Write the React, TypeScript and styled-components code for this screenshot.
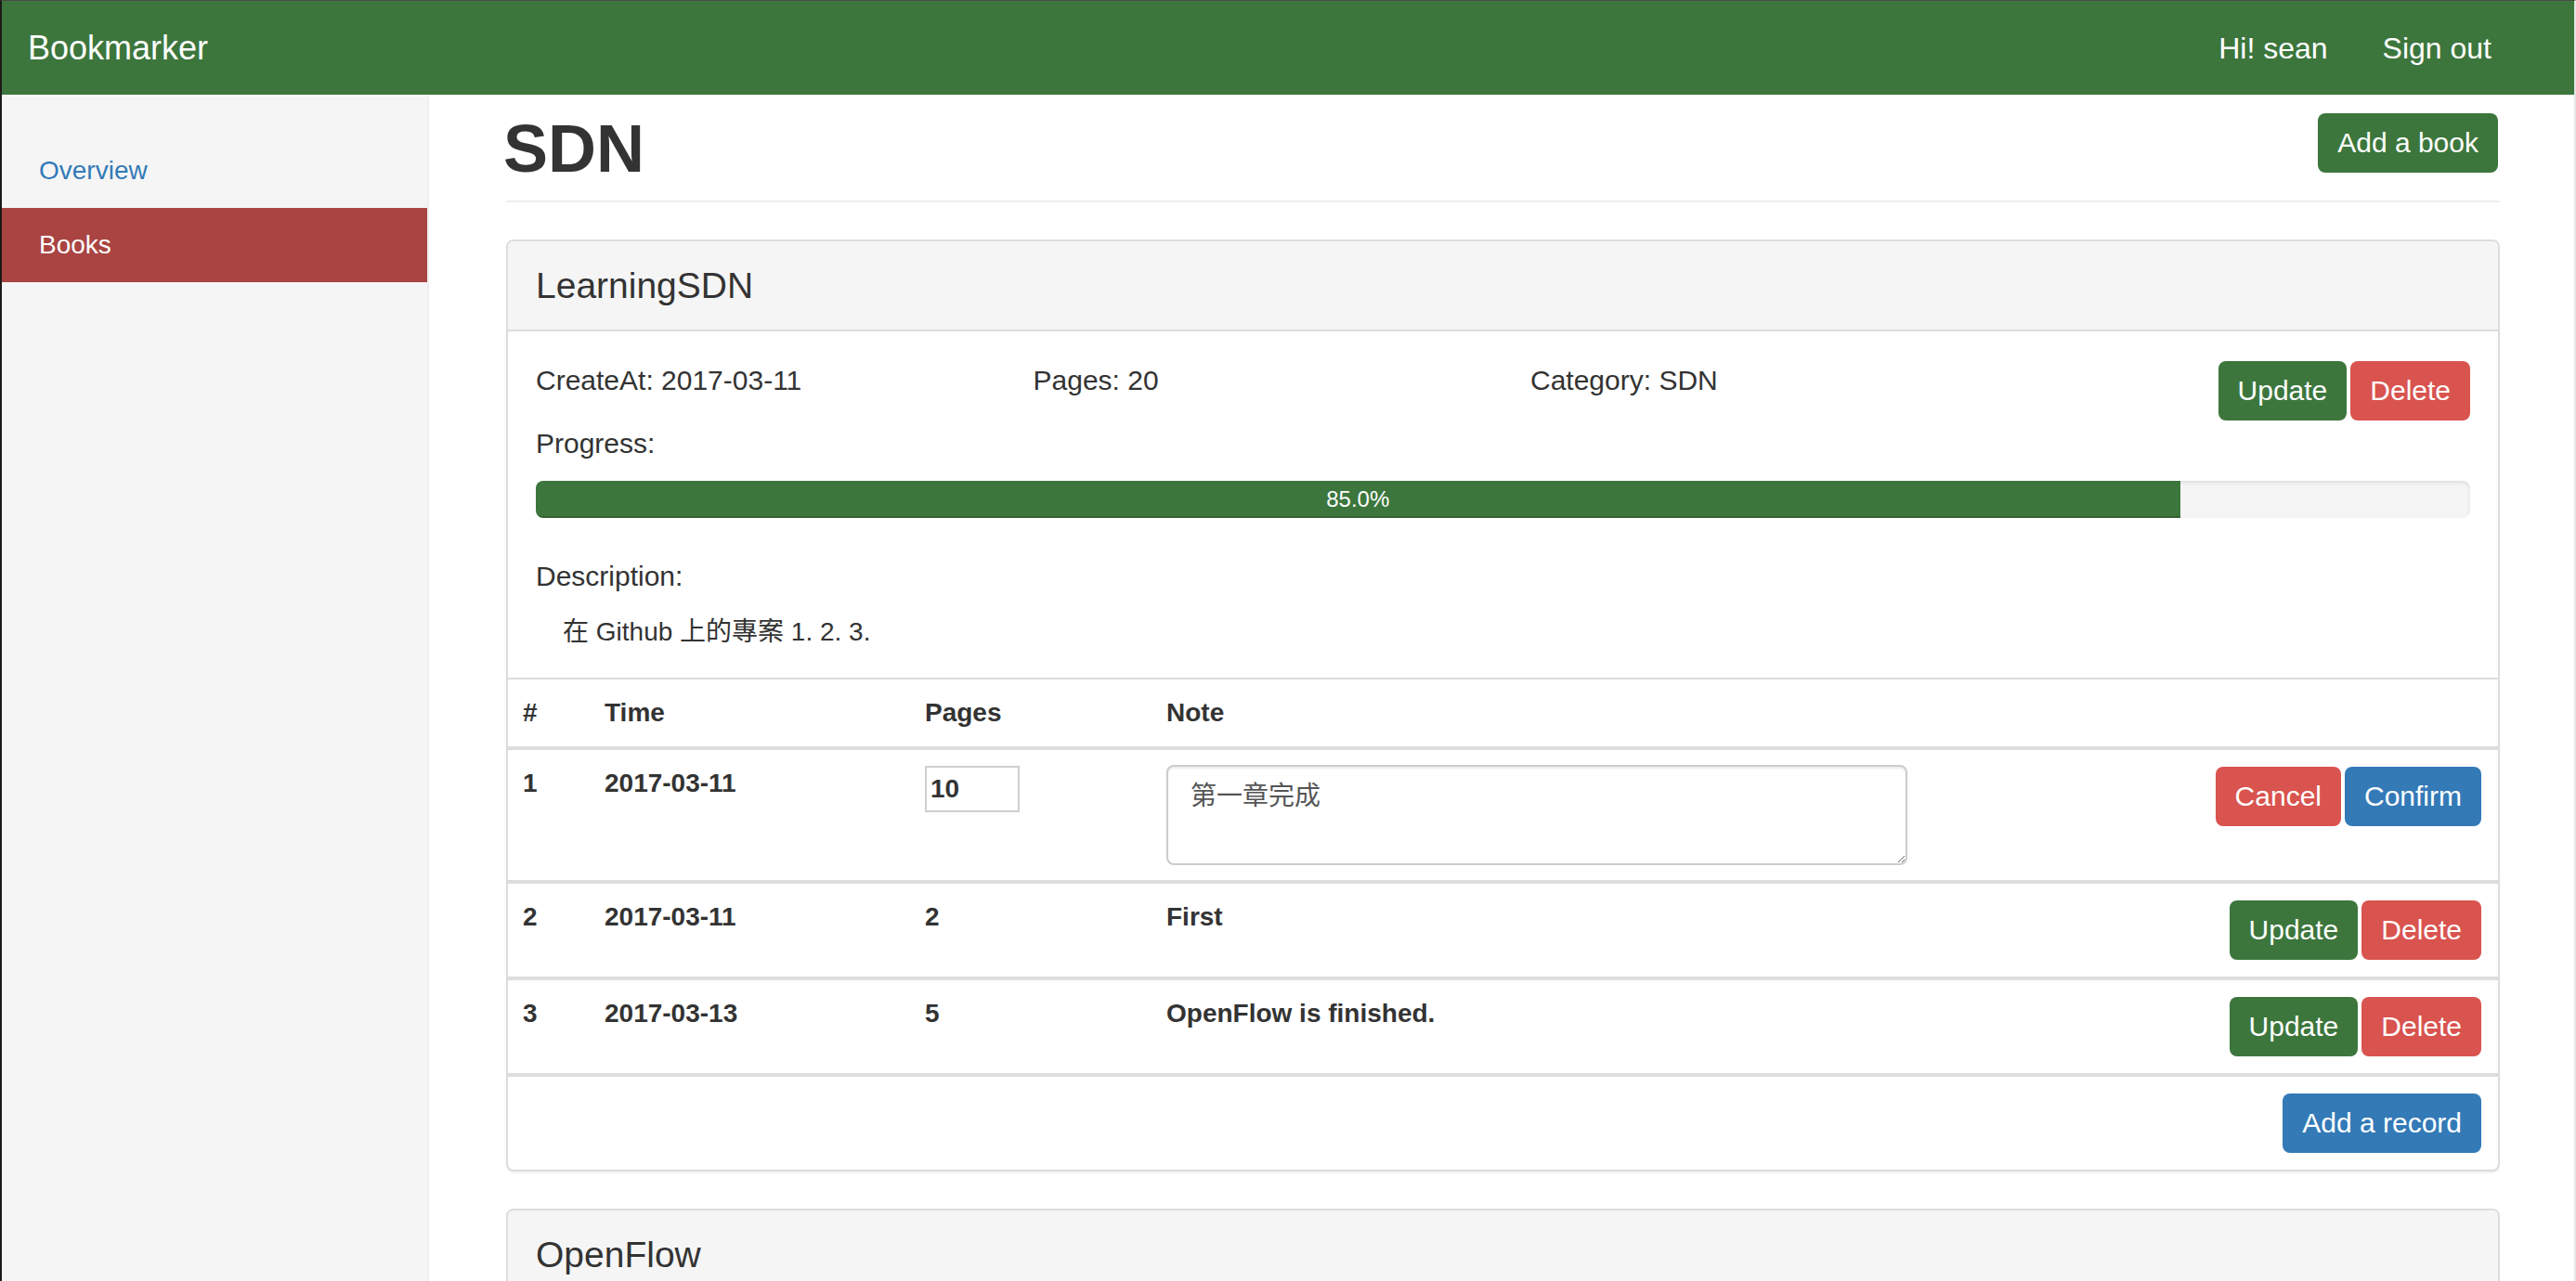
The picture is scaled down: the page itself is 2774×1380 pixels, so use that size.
import React from "react";
import styled, { createGlobalStyle } from "styled-components";

const GlobalStyle = createGlobalStyle`
  html, body { margin: 0; padding: 0; }
  body {
    font-family: "Liberation Sans", Arial, "Noto Sans CJK TC", sans-serif;
    color: #333;
    background: #fff;
    overflow: hidden;
  }
  * { box-sizing: border-box; }
`;

const GREEN = "#3c763d";
const RED = "#d9534f";
const BLUE = "#337ab7";

const Page = styled.div`
  height: 1380px;
  display: flex;
  flex-direction: column;
  border-top: 1px solid #4a4a4a;
  border-left: 2px solid #1d1a17;
  border-right: 2px solid #e6e6e6;
  overflow: hidden;
`;

const Navbar = styled.header`
  height: 103px;
  flex: none;
  background: ${GREEN};
  border-bottom: 2px solid #fff;
  display: flex;
  align-items: center;
  justify-content: space-between;
  padding: 0 89px 0 28px;
  color: #fff;
`;

const Brand = styled.div`
  font-size: 36px;
  line-height: 40px;
`;

const NavLinks = styled.nav`
  display: flex;
  gap: 59px;
  font-size: 32px;
  line-height: 40px;
`;

const Layout = styled.div`
  flex: 1;
  min-height: 0;
  display: flex;
`;

const Sidebar = styled.aside`
  width: 460px;
  flex: none;
  background: #f5f5f5;
  border-right: 2px solid #eee;
  padding-top: 40px;
`;

const SideItem = styled.div<{ $active?: boolean }>`
  height: 80px;
  display: flex;
  align-items: center;
  padding-left: 40px;
  font-size: 28px;
  color: ${(p) => (p.$active ? "#fff" : BLUE)};
  background: ${(p) => (p.$active ? "#a94442" : "transparent")};
`;

const Main = styled.main`
  flex: 1;
  min-width: 0;
  padding: 17px 80px 0 83px;
`;

const PageHeader = styled.div`
  display: flex;
  justify-content: space-between;
  align-items: flex-start;
  padding-bottom: 16px;
  border-bottom: 2px solid #eee;
  margin-bottom: 40px;
`;

const Title = styled.h1`
  margin: 0 0 0 -3px;
  font-size: 72px;
  line-height: 79px;
  font-weight: bold;
`;

const Button = styled.button<{ $variant: "green" | "red" | "blue" }>`
  height: 64px;
  padding: 0 21px;
  border: none;
  border-radius: 8px;
  font-family: inherit;
  font-size: 30px;
  line-height: 64px;
  color: #fff;
  white-space: nowrap;
  cursor: pointer;
  background: ${(p) =>
    p.$variant === "green" ? GREEN : p.$variant === "red" ? RED : BLUE};
`;

const HeaderButton = styled(Button)`
  margin: 1px 2px 0 0;
`;

const Panel = styled.section`
  border: 2px solid #ddd;
  border-radius: 8px;
  background: #fff;
  margin-bottom: 40px;
  box-shadow: 0 2px 2px rgba(0, 0, 0, 0.05);
`;

const PanelHeading = styled.div`
  height: 97px;
  background: #f5f5f5;
  border-bottom: 2px solid #ddd;
  border-radius: 6px 6px 0 0;
  display: flex;
  align-items: center;
  padding: 0 30px;
`;

const PanelTitle = styled.h3`
  margin: 0;
  font-size: 39px;
  font-weight: normal;
  line-height: 44px;
`;

const PanelBody = styled.div`
  padding: 30px 30px 29px;
`;

const InfoRow = styled.div`
  display: grid;
  grid-template-columns: 535.5px 535.5px 535.5px 1fr;
  height: 68px;
`;

const InfoCell = styled.div`
  font-size: 30px;
  line-height: 40px;
  padding-top: 3px;
`;

const ActionGroup = styled.div`
  display: flex;
  gap: 4px;
  align-items: center;
  justify-content: flex-end;
  height: 68px;
`;

const Label = styled.div<{ $top: number }>`
  font-size: 30px;
  line-height: 40px;
  margin-top: ${(p) => p.$top}px;
`;

const ProgressTrack = styled.div`
  margin-top: 20px;
  height: 40px;
  background: #f5f5f5;
  border-radius: 8px;
  overflow: hidden;
  box-shadow: inset 0 2px 4px rgba(0, 0, 0, 0.1);
`;

const ProgressFill = styled.div<{ $percent: number }>`
  width: ${(p) => p.$percent}%;
  height: 100%;
  background: ${GREEN};
  color: #fff;
  font-size: 24px;
  line-height: 40px;
  text-align: center;
  box-shadow: inset 0 -2px 0 rgba(0, 0, 0, 0.15);
`;

const DescText = styled.div`
  margin-top: 20px;
  padding-left: 29px;
  font-size: 28px;
  line-height: 40px;
`;

const RecordTable = styled.div`
  border-top: 2px solid #ddd;
`;

const GridRow = styled.div<{ $border?: boolean }>`
  display: grid;
  grid-template-columns: 88px 345px 260px 1fr auto;
  border-bottom: ${(p) => (p.$border ? "4px solid #ddd" : "none")};
`;

const Cell = styled.div<{ $right?: boolean }>`
  padding: ${(p) => (p.$right ? "16px 18px 16px 16px" : "16px")};
  font-size: 28px;
  font-weight: bold;
  line-height: 40px;
  white-space: nowrap;
`;

const PagesInput = styled.input`
  display: block;
  margin-top: 1px;
  width: 102px;
  height: 50px;
  border: 2px solid #cfcfcf;
  padding: 0 4px;
  font-family: inherit;
  font-size: 28px;
  font-weight: bold;
  color: #333;
  background: #fff;
  outline: none;
`;

const NoteArea = styled.textarea`
  display: block;
  width: 798px;
  height: 108px;
  border: 2px solid #ccc;
  border-radius: 8px;
  padding: 12px 24px;
  font-family: "Liberation Sans", "Noto Sans CJK TC", sans-serif;
  font-size: 28px;
  line-height: 40px;
  color: #555;
  box-shadow: inset 0 2px 2px rgba(0, 0, 0, 0.075);
  outline: none;
`;

const Footer = styled.div`
  display: flex;
  justify-content: flex-end;
  padding: 18px 18px;
`;

type RecordData = { id: number; time: string; pages: number; note: string };

const records: RecordData[] = [
  { id: 1, time: "2017-03-11", pages: 10, note: "第一章完成" },
  { id: 2, time: "2017-03-11", pages: 2, note: "First" },
  { id: 3, time: "2017-03-13", pages: 5, note: "OpenFlow is finished." },
];

function RecordRow({ r, editing }: { r: RecordData; editing: boolean }) {
  return (
    <GridRow $border>
      <Cell>{r.id}</Cell>
      <Cell>{r.time}</Cell>
      <Cell>{editing ? <PagesInput defaultValue={String(r.pages)} /> : r.pages}</Cell>
      <Cell>{editing ? <NoteArea defaultValue={r.note} /> : r.note}</Cell>
      <Cell $right>
        <ActionGroup>
          {editing ? (
            <>
              <Button $variant="red">Cancel</Button>
              <Button $variant="blue">Confirm</Button>
            </>
          ) : (
            <>
              <Button $variant="green">Update</Button>
              <Button $variant="red">Delete</Button>
            </>
          )}
        </ActionGroup>
      </Cell>
    </GridRow>
  );
}

type Book = {
  title: string;
  createdAt: string;
  pages: number;
  category: string;
  percent: number;
  description: string;
  items: RecordData[];
};

function BookPanel({ book }: { book: Book }) {
  return (
    <Panel>
      <PanelHeading>
        <PanelTitle>{book.title}</PanelTitle>
      </PanelHeading>
      <PanelBody>
        <InfoRow>
          <InfoCell>CreateAt: {book.createdAt}</InfoCell>
          <InfoCell>Pages: {book.pages}</InfoCell>
          <InfoCell>Category: {book.category}</InfoCell>
          <ActionGroup>
            <Button $variant="green">Update</Button>
            <Button $variant="red">Delete</Button>
          </ActionGroup>
        </InfoRow>
        <Label $top={3}>Progress:</Label>
        <ProgressTrack>
          <ProgressFill $percent={book.percent}>{book.percent.toFixed(1)}%</ProgressFill>
        </ProgressTrack>
        <Label $top={43}>Description:</Label>
        <DescText>{book.description}</DescText>
      </PanelBody>
      <RecordTable>
        <GridRow $border>
          <Cell>#</Cell>
          <Cell>Time</Cell>
          <Cell>Pages</Cell>
          <Cell>Note</Cell>
          <Cell $right />
        </GridRow>
        {book.items.map((r, i) => (
          <RecordRow key={r.id} r={r} editing={i === 0} />
        ))}
        <Footer>
          <Button $variant="blue">Add a record</Button>
        </Footer>
      </RecordTable>
    </Panel>
  );
}

function CollapsedPanel({ title }: { title: string }) {
  return (
    <Panel>
      <PanelHeading>
        <PanelTitle>{title}</PanelTitle>
      </PanelHeading>
    </Panel>
  );
}

const learningSdn: Book = {
  title: "LearningSDN",
  createdAt: "2017-03-11",
  pages: 20,
  category: "SDN",
  percent: 85,
  description: "在 Github 上的專案 1. 2. 3.",
  items: records,
};

export default function App() {
  return (
    <>
      <GlobalStyle />
      <Page>
        <Navbar>
          <Brand>Bookmarker</Brand>
          <NavLinks>
            <span>Hi! sean</span>
            <span>Sign out</span>
          </NavLinks>
        </Navbar>
        <Layout>
          <Sidebar>
            <SideItem>Overview</SideItem>
            <SideItem $active>Books</SideItem>
          </Sidebar>
          <Main>
            <PageHeader>
              <Title>SDN</Title>
              <HeaderButton $variant="green">Add a book</HeaderButton>
            </PageHeader>
            <BookPanel book={learningSdn} />
            <CollapsedPanel title="OpenFlow" />
          </Main>
        </Layout>
      </Page>
    </>
  );
}
